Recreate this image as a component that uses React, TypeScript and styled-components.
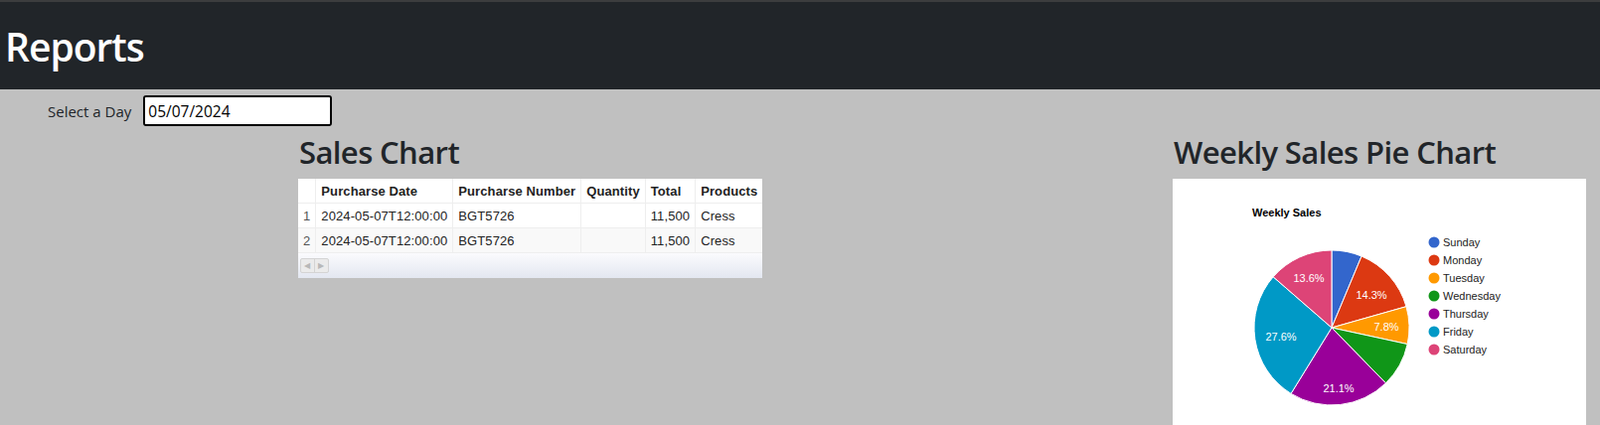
import React, { useState } from 'react';
import styled, { createGlobalStyle } from 'styled-components';

const GlobalStyle = createGlobalStyle`
  body {
    margin: 0;
    background-color: #c0c0c0;
    font-family: "Open Sans", "Noto Sans", sans-serif;
    color: #212529;
  }
`;

const Header = styled.header`
  display: flex;
  align-items: center;
  height: 88px;
  background-color: #212529;
  border-top: 2px solid #3c3d3e;
  padding-left: 5px;
`;

const Title = styled.h1`
  margin: 0;
  color: #fff;
  font-size: 39px;
  font-weight: 600;
  letter-spacing: -1px;
`;

const DateRow = styled.div`
  display: flex;
  align-items: center;
  gap: 12px;
  padding: 6px 0 0 48px;
`;

const Label = styled.label`
  font-size: 15px;
  color: #212529;
`;

const DateInput = styled.input`
  box-sizing: border-box;
  width: 190px;
  height: 31px;
  padding: 0 3px;
  border: 2px solid #000;
  border-radius: 3px;
  outline: 1px solid #fff;
  outline-offset: -3px;
  background: #fff;
  font-family: "Open Sans", sans-serif;
  font-size: 15.5px;
  color: #000;
`;

const Content = styled.div`
  display: flex;
  justify-content: space-between;
  padding: 0 14px 0 300px;
`;

const Section = styled.section<{ width?: number }>`
  width: ${p => (p.width ? `${p.width}px` : 'auto')};
`;

const Heading = styled.h2`
  margin: 8px 0 8px 1px;
  font-size: 31px;
  font-weight: 600;
  line-height: 1.2;
  letter-spacing: -0.6px;
  white-space: nowrap;
`;

const TableWrap = styled.div`
  display: inline-block;
  background: #fff;
  font-family: "Liberation Sans", Arial, sans-serif;
  font-size: 13px;
  letter-spacing: 0.1px;
  color: #222;
`;

const Table = styled.table`
  border-collapse: collapse;
`;

const Th = styled.th`
  height: 24px;
  padding: 0 5px;
  border: 1px solid #eee;
  border-top: none;
  text-align: left;
  font-weight: bold;
  white-space: nowrap;
  &:first-child { border-left: none; }
  &:last-child { border-right: none; }
`;

const Tr = styled.tr<{ alt?: boolean }>`
  background: ${p => (p.alt ? '#f9f9f9' : '#fff')};
`;

const Td = styled.td<{ align?: 'left' | 'right'; muted?: boolean }>`
  height: 24px;
  padding: 0 5px;
  border: 1px solid #eee;
  text-align: ${p => p.align || 'left'};
  color: ${p => (p.muted ? '#555' : '#222')};
  white-space: nowrap;
  &:first-child { border-left: none; }
  &:last-child { border-right: none; }
`;

const Pager = styled.div`
  display: flex;
  align-items: center;
  height: 25px;
  padding-left: 2px;
  background: linear-gradient(#fbfbfd, #e3e7f1);
`;

const PagerButtons = styled.div`
  display: flex;
  border: 1px solid #d4d4d4;
  border-radius: 2px;
  background: #ebebeb;
`;

const PagerButton = styled.span`
  width: 13px;
  height: 13px;
  display: flex;
  align-items: center;
  justify-content: center;
  font-size: 8px;
  color: #b8b8b8;
  & + & { border-left: 1px solid #d4d4d4; }
`;

const ChartPanel = styled.div`
  width: 416px;
  height: 300px;
  background: #fff;
`;

const rows = [
  { date: '2024-05-07T12:00:00', number: 'BGT5726', quantity: '', total: '11,500', products: 'Cress' },
  { date: '2024-05-07T12:00:00', number: 'BGT5726', quantity: '', total: '11,500', products: 'Cress' },
];

const slices = [
  { day: 'Sunday', pct: 6.3, color: '#3366cc' },
  { day: 'Monday', pct: 14.3, color: '#dc3912', label: [200, 117] },
  { day: 'Tuesday', pct: 7.8, color: '#ff9900', label: [215, 149] },
  { day: 'Wednesday', pct: 9.3, color: '#109618' },
  { day: 'Thursday', pct: 21.1, color: '#990099', label: [167, 211] },
  { day: 'Friday', pct: 27.6, color: '#0099c6', label: [109, 159] },
  { day: 'Saturday', pct: 13.6, color: '#dd4477', label: [137, 100] },
];

const CX = 160;
const CY = 150;
const R = 78;

const point = (frac: number) => {
  const a = frac * 2 * Math.PI;
  return [CX + R * Math.sin(a), CY - R * Math.cos(a)];
};

const PieChart: React.FC = () => {
  let acc = 0;
  return (
    <svg width="416" height="300" fontFamily="'Liberation Sans', Arial, sans-serif">
      <text x="80" y="38" fontSize="11" fontWeight="bold" fill="#000">Weekly Sales</text>
      {slices.map(s => {
        const start = acc / 100;
        acc += s.pct;
        const end = acc / 100;
        const [x0, y0] = point(start);
        const [x1, y1] = point(end);
        const large = end - start > 0.5 ? 1 : 0;
        return (
          <path
            key={s.day}
            d={`M${CX},${CY} L${x0},${y0} A${R},${R} 0 ${large} 1 ${x1},${y1} Z`}
            fill={s.color}
            stroke="#fff"
            strokeWidth="1"
          />
        );
      })}
      {slices.map(s =>
        s.label ? (
          <text key={s.day} x={s.label[0]} y={s.label[1] + 4} fontSize="11" fill="#fff" textAnchor="middle">
            {s.pct}%
          </text>
        ) : null
      )}
      {slices.map((s, i) => (
        <g key={s.day}>
          <circle cx="263" cy={64 + i * 18} r="5.5" fill={s.color} />
          <text x="272" y={68 + i * 18} fontSize="11" fill="#222">{s.day}</text>
        </g>
      ))}
    </svg>
  );
};

export default function App() {
  const [day, setDay] = useState('05/07/2024');
  return (
    <>
      <GlobalStyle />
      <Header>
        <Title>Reports</Title>
      </Header>
      <DateRow>
        <Label>Select a Day</Label>
        <DateInput value={day} onChange={e => setDay(e.target.value)} />
      </DateRow>
      <Content>
        <Section>
          <Heading>Sales Chart</Heading>
          <TableWrap>
            <Table>
              <thead>
                <tr>
                  <Th></Th>
                  <Th>Purcharse Date</Th>
                  <Th>Purcharse Number</Th>
                  <Th>Quantity</Th>
                  <Th>Total</Th>
                  <Th>Products</Th>
                </tr>
              </thead>
              <tbody>
                {rows.map((r, i) => (
                  <Tr key={i} alt={i % 2 === 1}>
                    <Td align="right" muted>{i + 1}</Td>
                    <Td>{r.date}</Td>
                    <Td>{r.number}</Td>
                    <Td align="right">{r.quantity}</Td>
                    <Td align="right">{r.total}</Td>
                    <Td>{r.products}</Td>
                  </Tr>
                ))}
              </tbody>
            </Table>
            <Pager>
              <PagerButtons>
                <PagerButton>◀</PagerButton>
                <PagerButton>▶</PagerButton>
              </PagerButtons>
            </Pager>
          </TableWrap>
        </Section>
        <Section width={416}>
          <Heading>Weekly Sales Pie Chart</Heading>
          <ChartPanel>
            <PieChart />
          </ChartPanel>
        </Section>
      </Content>
    </>
  );
}
